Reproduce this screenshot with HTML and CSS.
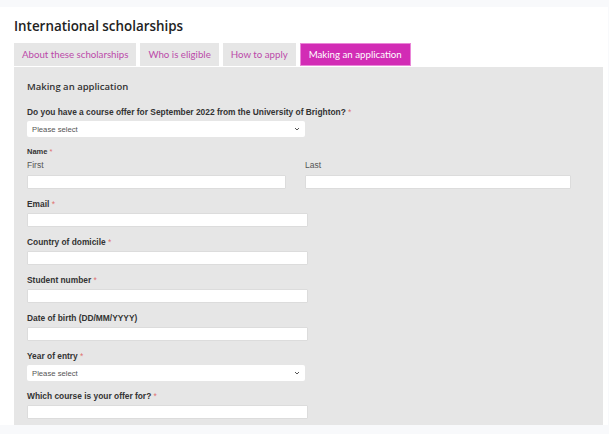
FILE: index.html
```html
<!DOCTYPE html>
<html lang="en">

<head>
    <meta charset="UTF-8">
    <meta name="viewport" content="width=device-width, initial-scale=1.0">
    <title>International scholarships</title>
    <link rel="stylesheet" href="styles.css">
</head>

<body>

    <div class="page">
        <h1>International scholarships</h1>

        <ul class="tabs">
            <li class="tab">About these scholarships</li>
            <li class="tab">Who is eligible</li>
            <li class="tab">How to apply</li>
            <li class="tab active">Making an application</li>
        </ul>

        <div class="panel">
            <h2>Making an application</h2>

            <form class="apply-form">
                <div class="field">
                    <label>Do you have a course offer for September 2022 from the University of Brighton? <span class="req">*</span></label>
                    <div class="select">
                        <span>Please select</span>
                        <svg width="6" height="4" viewBox="0 0 6 4"><path d="M1 1l2 2 2-2" fill="none" stroke="#555" stroke-width="1"/></svg>
                    </div>
                </div>

                <div class="field">
                    <label class="small">Name <span class="req">*</span></label>
                    <div class="name-row">
                        <div class="name-col first">
                            <span class="sub">First</span>
                            <input type="text">
                        </div>
                        <div class="name-col last">
                            <span class="sub">Last</span>
                            <input type="text">
                        </div>
                    </div>
                </div>

                <div class="field">
                    <label>Email <span class="req">*</span></label>
                    <input type="text">
                </div>

                <div class="field">
                    <label>Country of domicile <span class="req">*</span></label>
                    <input type="text">
                </div>

                <div class="field">
                    <label>Student number <span class="req">*</span></label>
                    <input type="text">
                </div>

                <div class="field">
                    <label>Date of birth (DD/MM/YYYY)</label>
                    <input type="text">
                </div>

                <div class="field">
                    <label>Year of entry <span class="req">*</span></label>
                    <div class="select">
                        <span>Please select</span>
                        <svg width="6" height="4" viewBox="0 0 6 4"><path d="M1 1l2 2 2-2" fill="none" stroke="#555" stroke-width="1"/></svg>
                    </div>
                </div>

                <div class="field">
                    <label>Which course is your offer for? <span class="req">*</span></label>
                    <input type="text">
                </div>
            </form>
        </div>
    </div>

</body>

</html>
```

FILE: styles.css
```css
body {
    margin: 0;
    padding: 0;
    background-color: #f8f9fb;
    font-family: "Liberation Sans", Arial, sans-serif;
}

.page {
    margin: 7px 1px 0 0;
    padding: 0 5px 0 14px;
    background-color: #fff;
    height: 418px;
    overflow: hidden;
}

h1 {
    margin: 0;
    padding-top: 10px;
    height: 26px;
    font-family: "Open Sans", sans-serif;
    font-weight: 600;
    font-size: 13.4px;
    line-height: 18px;
    color: #222;
}

.tabs {
    display: flex;
    gap: 4px;
    margin: 0;
    padding: 0;
    list-style: none;
}

.tab {
    height: 23px;
    padding: 0 8px;
    background-color: #e6e6e6;
    color: #bb4aa9;
    font-family: Lato, sans-serif;
    font-size: 9.7px;
    line-height: 23px;
}

.tab.active {
    box-sizing: border-box;
    background-color: #d22cb5;
    border: 1px solid #ea86d8;
    color: #fff;
    line-height: 21px;
}

.panel {
    margin-top: 1px;
    padding: 13px 13px 20px 13px;
    background-color: #e6e6e6;
}

h2 {
    margin: 0 0 13px 0;
    font-family: "Open Sans", sans-serif;
    font-weight: 600;
    font-size: 9.5px;
    line-height: 14px;
    color: #333;
}

.field {
    margin-bottom: 10px;
}

.field label {
    display: block;
    margin-bottom: 4px;
    font-size: 8.4px;
    font-weight: bold;
    line-height: 10px;
    color: #333;
}

.field label.small {
    margin-bottom: 3px;
    font-size: 7.5px;
}

.req {
    color: #e0706e;
    font-weight: normal;
}

.field input {
    display: block;
    box-sizing: border-box;
    width: 281px;
    height: 14px;
    margin: 0;
    padding: 0;
    border: 1px solid #dcdcdc;
    border-radius: 1px;
    background-color: #fff;
}

.select {
    display: flex;
    align-items: center;
    justify-content: space-between;
    box-sizing: border-box;
    width: 278px;
    height: 16px;
    padding: 0 5px;
    background-color: #fff;
    border-radius: 2px;
    font-size: 7.7px;
    color: #555;
}

.name-row {
    display: flex;
    gap: 19px;
}

.name-col .sub {
    display: block;
    margin-bottom: 5px;
    font-size: 8.5px;
    line-height: 10px;
    color: #555;
}

.name-col.first input {
    width: 259px;
}

.name-col.last input {
    width: 266px;
}
```
